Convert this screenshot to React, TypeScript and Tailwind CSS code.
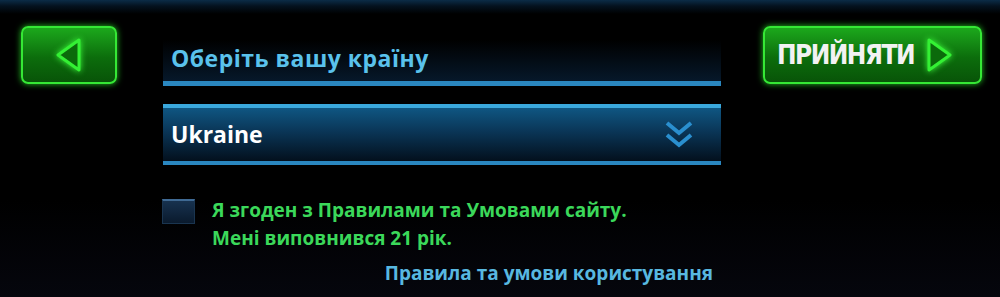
import * as React from "react";

function LeftArrow() {
  return (
    <svg width="30" height="36" viewBox="0 0 30 36" className="drop-shadow-[0_0_3px_#3dff3d]">
      <path d="M25 3 L4 18 L25 33 Z" fill="#0b6a0b" stroke="#34f034" strokeWidth="3" strokeLinejoin="round" />
    </svg>
  );
}

function RightArrow() {
  return (
    <svg width="30" height="36" viewBox="0 0 30 36" className="drop-shadow-[0_0_3px_#3dff3d]">
      <path d="M5 3 L26 18 L5 33 Z" fill="#0b6a0b" stroke="#34f034" strokeWidth="3" strokeLinejoin="round" />
    </svg>
  );
}

function Chevrons() {
  return (
    <svg width="30" height="30" viewBox="0 0 30 30">
      <path d="M3 3 L15 13 L27 3" fill="none" stroke="#2a8fcf" strokeWidth="4" />
      <path d="M3 15 L15 25 L27 15" fill="none" stroke="#2a8fcf" strokeWidth="4" />
    </svg>
  );
}

export default function App() {
  const [agreed, setAgreed] = React.useState(false);

  return (
    <div className="h-[297px] w-[1000px] overflow-hidden bg-[linear-gradient(to_bottom,#0b2c47_0px,#04121f_6px,#000_14px,#000_200px,#05060d_297px)] font-['Open_Sans',sans-serif]">
      <div className="flex items-start pl-[21px] pt-[26px]">
        <button
          type="button"
          aria-label="Назад"
          className="flex h-[58px] w-[96px] items-center justify-center rounded-[7px] border-2 border-[#35e835] bg-[linear-gradient(to_bottom,#1ca81c,#0c6d0c_55%,#085408)] shadow-[0_0_6px_#22c422]"
        >
          <LeftArrow />
        </button>

        <div className="ml-[46px] flex w-[558px] flex-col">
          <div className="mt-[14px] h-[41px] bg-[linear-gradient(to_bottom,#000,#06182a)] pl-[8px] pt-[3px] text-[23px] font-bold leading-[30px] tracking-[0.5px] text-[#5ac2ec]">
            Оберіть вашу країну
          </div>
          <div className="h-[5px] bg-[#2a87c0]" />

          <div className="mt-[18px] h-[4px] bg-[#3aa8dc]" />
          <div className="flex h-[53px] items-center justify-between bg-[linear-gradient(to_bottom,#0f5682,#0a3556_45%,#03101d)] pl-[8px] pr-[27px]">
            <span className="text-[23px] font-bold text-white">Ukraine</span>
            <Chevrons />
          </div>
          <div className="h-[4px] bg-[#2a87c0]" />

          <div className="mt-[34px] flex items-start">
            <button
              type="button"
              aria-label="Погоджуюсь"
              onClick={() => setAgreed(!agreed)}
              className="h-[25px] w-[33px] shrink-0 -translate-x-[1px] border border-[#1a3550] border-t-2 border-t-[#3f6a94] bg-[linear-gradient(to_bottom,#17324f,#0a1a2d)]"
            >
              {agreed && <span className="text-[16px] font-bold text-[#3ddc5c]">✓</span>}
            </button>
            <div className="ml-[16px] -mt-[3px] text-[19px] font-bold leading-[28px] text-[#3bd85a]">
              <div>Я згоден з Правилами та Умовами сайту.</div>
              <div>Мені виповнився 21 рік.</div>
            </div>
          </div>

          <div className="mt-[7px] pr-[8px] text-right text-[19px] font-bold leading-[28px] text-[#58b8e0]">
            Правила та умови користування
          </div>
        </div>

        <button
          type="button"
          className="ml-[42px] flex h-[58px] w-[219px] items-center justify-start gap-[10px] rounded-[7px] border-2 border-[#35e835] bg-[linear-gradient(to_bottom,#1ca81c,#0c6d0c_55%,#085408)] pl-[12px] shadow-[0_0_6px_#22c422]"
        >
          <span className="font-['DejaVu_Sans_Condensed','Roboto',sans-serif] text-[26px] font-bold leading-none tracking-[-1.5px] text-[#f2f2f2]">ПРИЙНЯТИ</span>
          <RightArrow />
        </button>
      </div>
    </div>
  );
}
